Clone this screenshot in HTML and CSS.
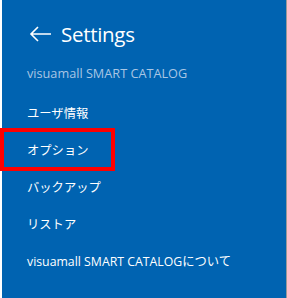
FILE: index.html
```html
<!DOCTYPE html>
<html lang="ja">

<head>
    <meta charset="UTF-8">
    <meta name="viewport" content="width=device-width, initial-scale=1.0">
    <title>Settings</title>
    <link rel="stylesheet" href="styles.css">
</head>

<body>
    <div class="panel">
        <!-- ヘッダー -->
        <div class="header">
            <svg class="back" width="23" height="16" viewBox="0 0 23 16">
                <path d="M22 8H2M9 1L2 8l7 7" fill="none" stroke="#fff" stroke-width="1.6"/>
            </svg>
            <span class="title">Settings</span>
        </div>
        <div class="app-name">visuamall SMART CATALOG</div>
        <!-- メニュー -->
        <ul class="menu">
            <li>ユーザ情報</li>
            <li>オプション</li>
            <li>バックアップ</li>
            <li>リストア</li>
            <li>visuamall SMART CATALOGについて</li>
        </ul>
    </div>
    <div class="highlight"></div>
</body>

</html>
```

FILE: styles.css
```css
body {
    margin: 0;
    padding: 0;
    background-color: #fff;
    font-family: "Open Sans", "Noto Sans CJK JP", sans-serif;
}

.panel {
    margin-left: 2px;
    width: 284px;
    height: 298px;
    background-color: #0063b1;
    border-right: 1px solid #999;
    color: #fff;
}

.header {
    display: flex;
    align-items: center;
    gap: 9px;
    padding: 20px 0 0 27px;
    height: 28px;
}

.title {
    font-size: 20.5px;
    letter-spacing: -0.3px;
}

.app-name {
    margin: 16px 0 0 25px;
    font-size: 12.7px;
    color: #a9c6e4;
}

.menu {
    list-style: none;
    margin: 13px 0 0 0;
    padding: 0 0 0 25px;
}

.menu li {
    height: 37px;
    line-height: 37px;
    font-size: 12.3px;
}

.highlight {
    position: absolute;
    left: 0;
    top: 128px;
    width: 107px;
    height: 35px;
    border: 4px solid #f00;
}
```
